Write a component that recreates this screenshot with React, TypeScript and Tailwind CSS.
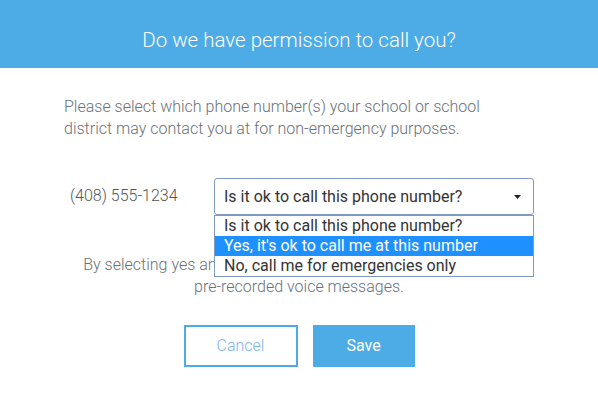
export default function App() {
  return (
    <div className="w-[598px] h-[402px] bg-white overflow-hidden font-['Roboto',sans-serif]">
      <header className="h-[68px] bg-[#4dace5] flex items-center justify-center pt-[12px]">
        <h1 className="text-[20.5px] font-light text-white">Do we have permission to call you?</h1>
      </header>

      <div className="px-[64px] pt-[28px]">
        <p className="text-[16px] leading-[22px] font-light text-[#68717b]">
          Please select which phone number(s) your school or school
          <br />
          district may contact you at for non-emergency purposes.
        </p>

        <div className="mt-[38px] flex items-start">
          <span className="w-[150px] pl-[6px] pt-[6px] text-[16px] font-light text-[#555]">(408) 555-1234</span>
          <div className="relative w-[320px]">
            <div className="h-[37px] border border-[#7e9ac4] rounded-[3px] flex items-center pl-[9px] pr-[12px] text-[16px] text-[#333]">
              <span className="flex-1">Is it ok to call this phone number?</span>
              <svg width="7" height="4" viewBox="0 0 7 4">
                <path d="M0 0h7L3.5 4z" fill="#222" />
              </svg>
            </div>
            <ul className="absolute left-0 top-[37px] w-full bg-white border border-[#7e9ac4] text-[16px] text-[#333] leading-[20px] z-10">
              <li className="pl-[9px] h-[20px]">Is it ok to call this phone number?</li>
              <li className="pl-[9px] h-[20px] bg-[#1e90ff] text-white">Yes, it's ok to call me at this number</li>
              <li className="pl-[9px] h-[20px]">No, call me for emergencies only</li>
            </ul>
          </div>
        </div>

        <p className="mt-[39px] text-center text-[16px] leading-[22px] font-light text-[#68717b]">
          By selecting yes and saving, you agree to receive our calls and
          <br />
          pre-recorded voice messages.
        </p>

        <div className="mt-[27px] flex justify-center gap-[15px]">
          <button className="w-[114px] h-[42px] border-2 border-[#4dace5] text-[16px] font-light text-[#7fb2ee]">Cancel</button>
          <button className="w-[102px] h-[42px] bg-[#4dace5] text-[16px] text-white">Save</button>
        </div>
      </div>
    </div>
  );
}
